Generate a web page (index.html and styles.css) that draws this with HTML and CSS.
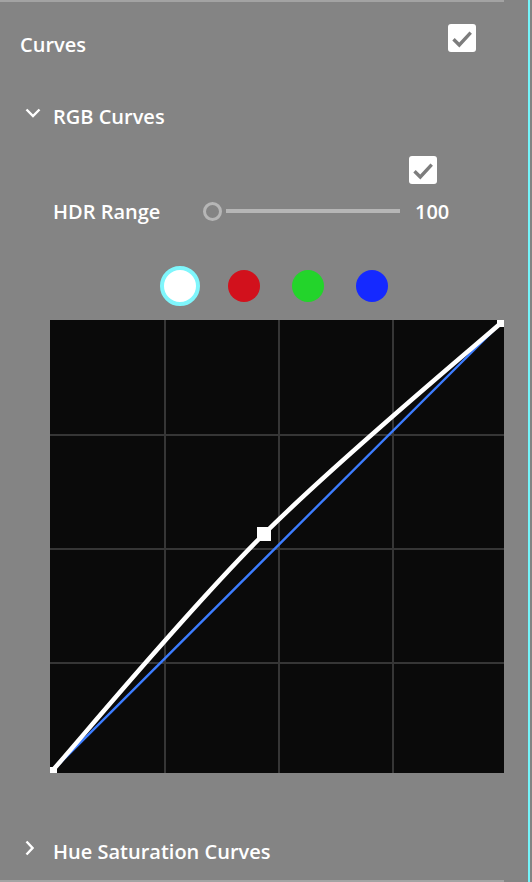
FILE: index.html
```html
<!DOCTYPE html>
<html>
<head>
<meta charset="utf-8">
<link rel="stylesheet" href="styles.css">
</head>
<body>
<div class="panel">
  <div class="strip"></div>
  <div class="header">
    <div class="title">Curves</div>
    <div class="checkbox header-check">
      <svg viewBox="0 0 28 28" width="28" height="28"><path d="M5.5 15.3 L11.3 21 L22.7 8.7" fill="none" stroke="#7d7d7d" stroke-width="3.4"/></svg>
    </div>
  </div>
  <div class="section-row rgb-row">
    <svg class="chev-down" viewBox="0 0 16 10" width="16" height="10"><path d="M1.5 1.5 L8 8 L14.5 1.5" fill="none" stroke="#fff" stroke-width="2.4"/></svg>
    <div class="section-title">RGB Curves</div>
  </div>
  <div class="check-row">
    <div class="checkbox">
      <svg viewBox="0 0 28 28" width="28" height="28"><path d="M5.5 15.3 L11.3 21 L22.7 8.7" fill="none" stroke="#7d7d7d" stroke-width="3.4"/></svg>
    </div>
  </div>
  <div class="hdr-row">
    <div class="hdr-label">HDR Range</div>
    <div class="knob"></div>
    <div class="track"></div>
    <div class="hdr-value">100</div>
  </div>
  <div class="dots-row">
    <div class="slot"><div class="dot dot-white"></div></div>
    <div class="slot"><div class="dot dot-red"></div></div>
    <div class="slot"><div class="dot dot-green"></div></div>
    <div class="slot"><div class="dot dot-blue"></div></div>
  </div>
  <div class="graph">
    <svg viewBox="0 0 454 453" width="454" height="453">
      <rect x="0" y="0" width="454" height="453" fill="#0a0a0a"/>
      <g stroke="#363636" stroke-width="2">
        <line x1="115" y1="0" x2="115" y2="453"/>
        <line x1="229" y1="0" x2="229" y2="453"/>
        <line x1="343" y1="0" x2="343" y2="453"/>
        <line x1="0" y1="115" x2="454" y2="115"/>
        <line x1="0" y1="229" x2="454" y2="229"/>
        <line x1="0" y1="343" x2="454" y2="343"/>
      </g>
      <line x1="3" y1="450" x2="451" y2="3" stroke="#3d7dff" stroke-width="2.4"/>
      <path d="M3 450 C 38 410, 139 288.5, 214 214 C 288.7 139.5, 410.7 38.2, 451 3" fill="none" stroke="#fff" stroke-width="4.5"/>
      <rect x="207" y="207" width="14" height="14" fill="#fff"/>
      <rect x="0" y="447" width="7" height="7" fill="#fff"/>
      <rect x="447" y="0" width="7" height="7" fill="#fff"/>
    </svg>
  </div>
  <div class="section-row hue-row">
    <svg class="chev-right" viewBox="0 0 9 16" width="9" height="16"><path d="M1.5 1.5 L7.5 8 L1.5 14.5" fill="none" stroke="#fff" stroke-width="2.4"/></svg>
    <div class="section-title">Hue Saturation Curves</div>
  </div>
  <div class="strip bottom-strip"></div>
</div>
</body>
</html>
```
FILE: styles.css
```css
html, body {
  margin: 0;
  padding: 0;
  background: #848484;
}
body {
  width: 532px;
  height: 882px;
  overflow: hidden;
  font-family: "Open Sans", "Liberation Sans", sans-serif;
  color: #fff;
}
.panel {
  width: 530px;
  height: 882px;
  box-sizing: border-box;
  border-right: 2px solid #74f4fa;
  display: flex;
  flex-direction: column;
}
.strip {
  width: 504px;
  height: 2px;
  background: #a3a3a3;
  flex: none;
}
.bottom-strip {
  margin-top: auto;
}
.header {
  display: flex;
  align-items: flex-start;
  height: 78px;
  padding: 22px 0 0 20px;
  box-sizing: border-box;
}
.title, .section-title, .hdr-label, .hdr-value {
  font-size: 20px;
  font-weight: 600;
  line-height: 24px;
  white-space: nowrap;
}
.title {
  margin-top: 9px;
}
.checkbox {
  width: 28px;
  height: 28px;
  background: #fff;
  border-radius: 3px;
  flex: none;
}
.checkbox svg {
  display: block;
}
.header-check {
  margin-left: auto;
  margin-right: 52px;
}
.section-row {
  display: flex;
  align-items: flex-start;
  padding-left: 25px;
}
.rgb-row {
  height: 70px;
  padding-top: 25px;
  box-sizing: border-box;
}
.chev-down {
  margin-top: 3px;
  flex: none;
}
.rgb-row .section-title {
  margin-left: 12px;
}
.check-row {
  height: 34px;
  padding: 6px 0 0 409px;
  box-sizing: border-box;
}
.hdr-row {
  display: flex;
  align-items: flex-start;
  height: 54px;
  padding: 16px 0 0 53px;
  box-sizing: border-box;
}
.hdr-label {
  width: 150px;
}
.knob {
  width: 19px;
  height: 19px;
  box-sizing: border-box;
  border: 3.5px solid #b6b6b6;
  border-radius: 50%;
  margin-top: 1.5px;
  flex: none;
}
.track {
  width: 174px;
  height: 4px;
  background: #b6b6b6;
  margin: 9px 0 0 4px;
  flex: none;
}
.hdr-value {
  margin-left: 15px;
}
.dots-row {
  display: flex;
  align-items: center;
  padding: 27.5px 0 14.5px 148px;
}
.slot {
  width: 64px;
  height: 40px;
  display: flex;
  align-items: center;
  justify-content: center;
}
.dot {
  width: 32px;
  height: 32px;
  border-radius: 50%;
}
.dot-white {
  width: 40px;
  height: 40px;
  box-sizing: border-box;
  background: #fff;
  border: 4px solid #7ff6fc;
}
.dot-red { background: #d2111c; }
.dot-green { background: #23d42b; }
.dot-blue { background: #1529ff; }
.graph {
  margin-left: 50px;
  width: 454px;
  height: 453px;
}
.graph svg {
  display: block;
}
.hue-row {
  padding-top: 67px;
}
.chev-right {
  margin-top: 0;
  flex: none;
}
.hue-row .section-title {
  margin-left: 19px;
}
```
